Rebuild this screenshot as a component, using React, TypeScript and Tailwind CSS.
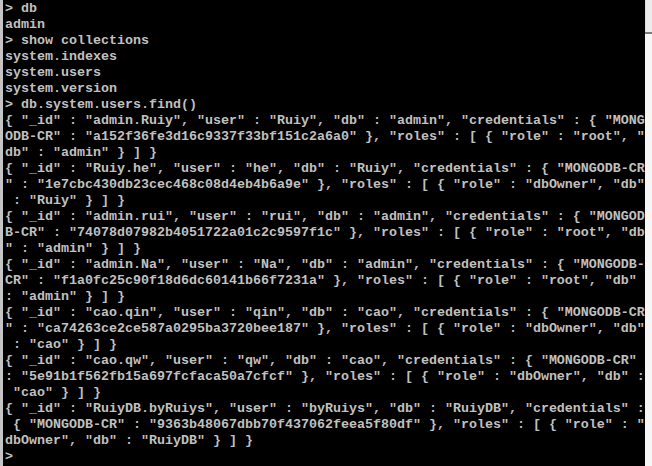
import React from 'react';

const records = [
  '{ "_id" : "admin.Ruiy", "user" : "Ruiy", "db" : "admin", "credentials" : { "MONGODB-CR" : "a152f36fe3d16c9337f33bf151c2a6a0" }, "roles" : [ { "role" : "root", "db" : "admin" } ] }',
  '{ "_id" : "Ruiy.he", "user" : "he", "db" : "Ruiy", "credentials" : { "MONGODB-CR" : "1e7cbc430db23cec468c08d4eb4b6a9e" }, "roles" : [ { "role" : "dbOwner", "db" : "Ruiy" } ] }',
  '{ "_id" : "admin.rui", "user" : "rui", "db" : "admin", "credentials" : { "MONGODB-CR" : "74078d07982b4051722a01c2c9597f1c" }, "roles" : [ { "role" : "root", "db" : "admin" } ] }',
  '{ "_id" : "admin.Na", "user" : "Na", "db" : "admin", "credentials" : { "MONGODB-CR" : "f1a0fc25c90f18d6dc60141b66f7231a" }, "roles" : [ { "role" : "root", "db" : "admin" } ] }',
  '{ "_id" : "cao.qin", "user" : "qin", "db" : "cao", "credentials" : { "MONGODB-CR" : "ca74263ce2ce587a0295ba3720bee187" }, "roles" : [ { "role" : "dbOwner", "db" : "cao" } ] }',
  '{ "_id" : "cao.qw", "user" : "qw", "db" : "cao", "credentials" : { "MONGODB-CR" : "5e91b1f562fb15a697fcfaca50a7cfcf" }, "roles" : [ { "role" : "dbOwner", "db" : "cao" } ] }',
  '{ "_id" : "RuiyDB.byRuiys", "user" : "byRuiys", "db" : "RuiyDB", "credentials" : { "MONGODB-CR" : "9363b48067dbb70f437062feea5f80df" }, "roles" : [ { "role" : "dbOwner", "db" : "RuiyDB" } ] }',
];

// console is 80 columns wide, long output wraps hard
const wrap = (s: string) => {
  const out: string[] = [];
  for (let i = 0; i < s.length; i += 80) out.push(s.slice(i, i + 80));
  return out;
};

const lines = [
  '> db',
  'admin',
  '> show collections',
  'system.indexes',
  'system.users',
  'system.version',
  '> db.system.users.find()',
  ...records.flatMap(wrap),
  '>',
];

export default function App() {
  return (
    <div className="flex w-[652px] h-[466px] overflow-hidden bg-black">
      {/* window frame edge */}
      <div className="w-[3px] shrink-0 bg-[#c4c4c4]" />

      {/* console text */}
      <div className="flex-1 pl-[2px] pt-[1px] overflow-hidden">
        <pre
          className="m-0 text-[13.333px] leading-[16px] font-bold text-[#c0c0c0] whitespace-pre"
          style={{ fontFamily: '"Liberation Mono", "DejaVu Sans Mono", monospace' }}
        >
          {lines.map((l, i) => (
            <div key={i} className="h-[16px]">{l}</div>
          ))}
        </pre>
      </div>

      {/* scrollbar */}
      <div className="w-[7px] shrink-0 flex flex-col">
        <div className="h-[32px] bg-[#ececec] border-l border-[#dcdcdc]" />
        <div className="h-[2px] bg-[#7a7a7a]" />
        <div className="flex-1 bg-[#f6f6f6]" />
      </div>
    </div>
  );
}
